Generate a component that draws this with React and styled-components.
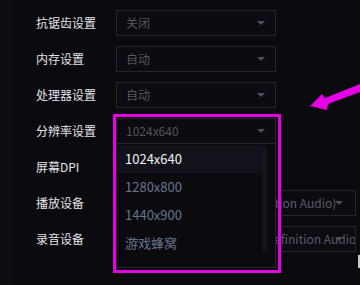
import React from 'react';
import styled, { createGlobalStyle } from 'styled-components';

const GlobalStyle = createGlobalStyle`
  html, body {
    margin: 0;
    padding: 0;
    background: #0a0a0f;
    overflow: hidden;
  }
  body {
    font-family: "Noto Sans CJK SC", "Noto Sans", sans-serif;
  }
`;

const Page = styled.div`
  position: relative;
  width: 360px;
  height: 285px;
  display: flex;
  overflow: hidden;
  background: #0a0a0f;
`;

const SideStrip = styled.div`
  width: 14px;
  background: #0e0d14;
  border-right: 1px solid #08080b;
`;

const Form = styled.div`
  display: flex;
  flex-direction: column;
  gap: 10px;
  padding: 10px 0 0 21px;
`;

const Row = styled.div`
  position: relative;
  display: flex;
  align-items: center;
  height: 26px;
`;

const Label = styled.div`
  width: 80px;
  font-size: 12px;
  color: #e4e4e8;
  line-height: 26px;
`;

const SelectBox = styled.div`
  position: relative;
  box-sizing: border-box;
  width: ${(p) => p.$width || 160}px;
  height: 26px;
  border: 1px solid #25252d;
  background: #0b0b10;
  padding: 0 1px 0 ${(p) => p.$indent || 9}px;
  font-size: 12px;
  line-height: 24px;
  color: ${(p) => p.$color || '#55555f'};
  white-space: nowrap;
  overflow: hidden;
`;

const Caret = styled.span`
  position: absolute;
  right: ${(p) => p.$right || 10}px;
  top: 10px;
  width: 0;
  height: 0;
  border-left: 4px solid transparent;
  border-right: 4px solid transparent;
  border-top: 4px solid #4a5364;
`;

const Dropdown = styled.ul`
  position: absolute;
  top: 26px;
  left: 80px;
  box-sizing: border-box;
  width: 160px;
  height: 124px;
  margin: 0;
  padding: 1px 0 0;
  list-style: none;
  background: #0a0a0f;
  border: 1px solid #25252b;
  border-top: none;
  z-index: 5;
`;

const Item = styled.li`
  height: 28px;
  line-height: 28px;
  padding-left: 8px;
  margin-right: 13px;
  font-size: 13px;
  color: ${(p) => (p.$active ? '#f2f2f4' : '#66768c')};
  background: ${(p) => (p.$active ? '#12121a' : 'transparent')};
`;

const ScrollThumb = styled.div`
  position: absolute;
  right: 8px;
  top: 2px;
  width: 5px;
  height: 106px;
  border-radius: 3px;
  background: #14141b;
`;

const Highlight = styled.div`
  position: absolute;
  left: 113px;
  top: 114px;
  width: 168px;
  height: 159px;
  box-sizing: border-box;
  border: 3px solid #e600e6;
  z-index: 6;
  pointer-events: none;
`;

const Pointer = styled.svg`
  position: absolute;
  left: 300px;
  top: 80px;
  z-index: 6;
`;

const EdgeMark = styled.div`
  position: absolute;
  right: 0;
  top: 255px;
  width: 2px;
  height: 13px;
  background: #c8c8cc;
`;

const rows = [
  { label: '抗锯齿设置', value: '关闭' },
  { label: '内存设置', value: '自动' },
  { label: '处理器设置', value: '自动' },
];

const resolutions = ['1024x640', '1280x800', '1440x900', '游戏蜂窝'];

const App = () => {
  return (
    <>
      <GlobalStyle />
      <Page>
        <SideStrip />
        <Form>
          {rows.map((row) => (
            <Row key={row.label}>
              <Label>{row.label}</Label>
              <SelectBox>
                {row.value}
                <Caret />
              </SelectBox>
            </Row>
          ))}
          <Row>
            <Label>分辨率设置</Label>
            <SelectBox>
              1024x640
              <Caret />
            </SelectBox>
            <Dropdown>
              {resolutions.map((r, i) => (
                <Item key={r} $active={i === 0}>
                  {r}
                </Item>
              ))}
              <ScrollThumb />
            </Dropdown>
          </Row>
          <Row>
            <Label>屏幕DPI</Label>
            <SelectBox>
              自动
              <Caret />
            </SelectBox>
          </Row>
          <Row>
            <Label>播放设备</Label>
            <SelectBox $width={240} $color="#5c5c68">
              扬声器 (Realtek High Definition Audio)
              <Caret $right={12} />
            </SelectBox>
          </Row>
          <Row>
            <Label>录音设备</Label>
            <SelectBox $width={240} $color="#5c5c68">
              麦克风阵列 (Realtek High Definition Audio)
              <Caret $right={12} />
            </SelectBox>
          </Row>
        </Form>
        <Highlight />
        <Pointer width="60" height="40" viewBox="300 80 60 40">
          <polygon
            points="310,106 322,94 325,98 360,84 360,92 328,104 327,110"
            fill="#e600e6"
          />
        </Pointer>
        <EdgeMark />
      </Page>
    </>
  );
};

export default App;
